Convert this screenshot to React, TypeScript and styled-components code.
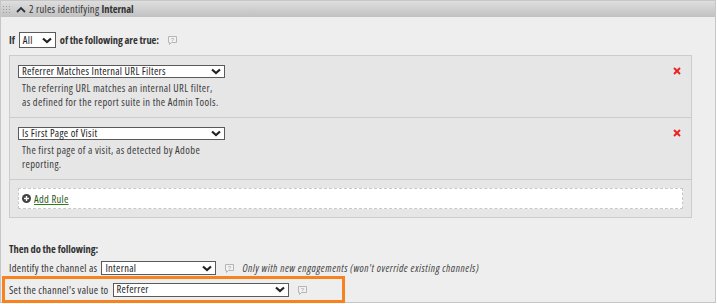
import React from 'react';
import styled, { createGlobalStyle } from 'styled-components';

const Global = createGlobalStyle`
  html, body { margin: 0; padding: 0; background: #ffffff; }
  body {
    font-family: "Open Sans", Lato, sans-serif;
    font-stretch: 75%;
    font-size: 10.5px;
    letter-spacing: 0.3px;
    color: #333333;
  }
`;

const Panel = styled.div`
  width: 716px;
  height: 303px;
  box-sizing: border-box;
  border: 1px solid #c6c6c6;
  background: #eeeeee;
  display: flex;
  flex-direction: column;
`;

const Header = styled.div`
  height: 16px;
  flex: 0 0 16px;
  background: linear-gradient(#dedede, #c1c1c1);
  display: flex;
  align-items: center;
  padding-left: 2px;
  color: #333;
`;

const HeaderTitle = styled.span`
  margin-left: 3px;
`;

const Body = styled.div`
  padding: 15px 8px 0 8px;
  display: flex;
  flex-direction: column;
`;

const Row = styled.div<{ $mt?: number }>`
  display: flex;
  align-items: center;
  gap: 4px;
  margin-top: ${(p) => p.$mt ?? 0}px;
  white-space: nowrap;
`;

const Bold = styled.span`
  font-weight: bold;
  letter-spacing: -0.05px;
`;

const Italic = styled.span`
  font-style: italic;
  letter-spacing: 0.5px;
  color: #444;
  margin-left: 3px;
`;

const SelectBox = styled.div<{ $w: number; $h: number }>`
  width: ${(p) => p.$w}px;
  height: ${(p) => p.$h}px;
  box-sizing: border-box;
  border: 1px solid #5a5a5a;
  background: #ffffff;
  display: flex;
  align-items: center;
  justify-content: space-between;
  padding: 0 3px 0 3px;
  color: #222;
  line-height: 1;
`;

const RulesBox = styled.div`
  margin-top: 7px;
  width: 683px;
  box-sizing: border-box;
  border: 1px solid #cccccc;
  background: #e6e6e6;
`;

const RuleRow = styled.div`
  height: 62px;
  box-sizing: border-box;
  border-bottom: 1px solid #cccccc;
  padding: 9px 10px 0 8px;
  display: flex;
  justify-content: space-between;
  align-items: flex-start;
`;

const RuleMain = styled.div`
  display: flex;
  flex-direction: column;
`;

const Desc = styled.div`
  margin-top: 3px;
  padding-left: 4px;
  line-height: 14px;
  letter-spacing: 0.35px;
  color: #3c3c3c;
`;

const RemoveBtn = styled.div`
  margin-top: 2px;
  width: 8px;
  height: 8px;
  display: flex;
`;

const AddArea = styled.div`
  padding: 8px;
`;

const AddBox = styled.div`
  height: 21px;
  box-sizing: border-box;
  border: 1px dashed #c8c8c8;
  background: #ffffff;
  display: flex;
  align-items: center;
  gap: 3px;
  padding-left: 3px;
`;

const AddLink = styled.a`
  color: #1f5a16;
  text-decoration: underline;
  text-decoration-color: #2d7a1a;
  cursor: pointer;
`;

const Highlight = styled.div`
  margin: 1px 0 0 -7px;
  width: 343px;
  height: 27px;
  box-sizing: border-box;
  border: 3px solid #f7821f;
  padding-left: 4px;
  display: flex;
  align-items: center;
  gap: 4px;
  white-space: nowrap;
`;

const Chevron = () => (
  <svg width="10" height="7" viewBox="0 0 10 7">
    <polyline points="1,1.5 5,5 9,1.5" fill="none" stroke="#222" strokeWidth="2.2" />
  </svg>
);

const Select = ({ w, h, label }: { w: number; h: number; label: string }) => (
  <SelectBox $w={w} $h={h}>
    <span>{label}</span>
    <Chevron />
  </SelectBox>
);

const Help = () => (
  <svg width="11" height="10" viewBox="0 0 11 10" style={{ marginLeft: 4 }}>
    <path d="M1.5 1.5 h8 v6 h-5 l-2 2 v-2 h-1 z" fill="#f2f2f2" stroke="#b5b5b5" strokeWidth="1" />
    <text x="5.5" y="6.8" fontSize="6" textAnchor="middle" fill="#aaa" fontFamily="Liberation Sans, sans-serif">?</text>
  </svg>
);

const RedX = () => (
  <svg width="8" height="8" viewBox="0 0 8 8">
    <line x1="1" y1="1" x2="7" y2="7" stroke="#ee2222" strokeWidth="2" />
    <line x1="7" y1="1" x2="1" y2="7" stroke="#ee2222" strokeWidth="2" />
  </svg>
);

const Grip = () => (
  <svg width="8" height="7" viewBox="0 0 8 7">
    {[0, 1, 2].map((r) =>
      [0, 1, 2].map((c) => <rect key={`${r}${c}`} x={c * 3} y={r * 3} width="1" height="1" fill="#9a9a9a" />)
    )}
  </svg>
);

const Caret = () => (
  <svg width="10" height="7" viewBox="0 0 10 7" style={{ marginLeft: 5 }}>
    <polyline points="1,6 5,2 9,6" fill="none" stroke="#2b3440" strokeWidth="1.8" />
  </svg>
);

const PlusIcon = () => (
  <svg width="9" height="9" viewBox="0 0 9 9">
    <circle cx="4.5" cy="4.5" r="4.5" fill="#444" />
    <line x1="2" y1="4.5" x2="7" y2="4.5" stroke="#fff" strokeWidth="1.4" />
    <line x1="4.5" y1="2" x2="4.5" y2="7" stroke="#fff" strokeWidth="1.4" />
  </svg>
);

const rules = [
  {
    label: 'Referrer Matches Internal URL Filters',
    desc: ['The referring URL matches an internal URL filter,', 'as defined for the report suite in the Admin Tools.'],
  },
  {
    label: 'Is First Page of Visit',
    desc: ['The first page of a visit, as detected by Adobe', 'reporting.'],
  },
];

export default function App() {
  return (
    <>
      <Global />
      <Panel>
        <Header>
          <Grip />
          <Caret />
          <HeaderTitle>
            2 rules identifying <Bold>Internal</Bold>
          </HeaderTitle>
        </Header>
        <Body>
          <Row>
            <Bold>If</Bold>
            <Select w={37} h={16} label="All" />
            <Bold>of the following are true:</Bold>
            <Help />
          </Row>
          <RulesBox>
            {rules.map((r) => (
              <RuleRow key={r.label}>
                <RuleMain>
                  <Select w={207} h={13} label={r.label} />
                  <Desc>
                    {r.desc.map((d) => (
                      <div key={d}>{d}</div>
                    ))}
                  </Desc>
                </RuleMain>
                <RemoveBtn>
                  <RedX />
                </RemoveBtn>
              </RuleRow>
            ))}
            <AddArea>
              <AddBox>
                <PlusIcon />
                <AddLink>Add Rule</AddLink>
              </AddBox>
            </AddArea>
          </RulesBox>
          <Row $mt={24}>
            <Bold>Then do the following:</Bold>
          </Row>
          <Row $mt={5}>
            <span>Identify the channel as</span>
            <Select w={115} h={14} label="Internal" />
            <Help />
            <Italic>Only with new engagements (won't override existing channels)</Italic>
          </Row>
          <Highlight>
            <span>Set the channel's value to</span>
            <Select w={176} h={14} label="Referrer" />
            <Help />
          </Highlight>
        </Body>
      </Panel>
    </>
  );
}
